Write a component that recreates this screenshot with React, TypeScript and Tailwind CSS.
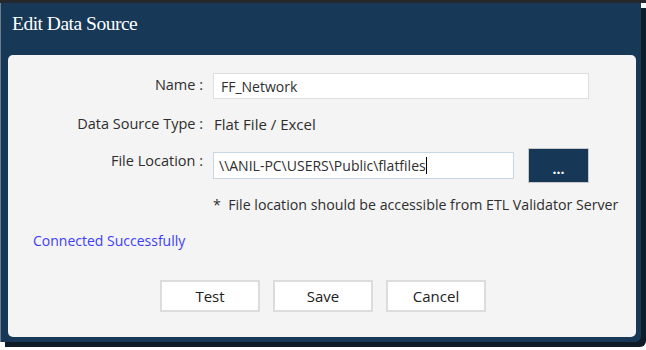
import React from "react";

const sans = { fontFamily: '"Open Sans", "Noto Sans", sans-serif' };

export default function App() {
  return (
    <div className="w-[646px] h-[350px] bg-white overflow-hidden border-t-[3px] border-[#25292d]">
      <div className="w-[641px] h-[339px] bg-[#173856] border-l border-[#6d7c88] rounded-br-[6px] shadow-[5px_5px_0_#0e1c28] flex flex-col">
        <div
          className="h-[52px] pl-[11px] pt-[8px] text-white text-[19.5px] leading-[25px] tracking-[-0.5px]"
          style={{ fontFamily: '"Liberation Serif", "DejaVu Serif", serif' }}
        >
          Edit Data Source
        </div>
        <div
          className="ml-[7px] mr-[5px] mb-[5px] flex-1 bg-[#f4f4f4] rounded-[5px] text-[14.5px] text-[#2e2e2e] flex flex-col"
          style={sans}
        >
          <div className="mt-[18px] grid grid-cols-[195px_1fr] gap-x-[10px] items-center">
            <div className="text-right -mt-[3px]">Name :</div>
            <div className="w-[376px] h-[26px] bg-white border border-[#dedede] pl-[7px] flex items-center text-[14px]">
              FF_Network
            </div>
          </div>
          <div className="mt-[12px] h-[26px] grid grid-cols-[195px_1fr] gap-x-[10px] items-center">
            <div className="text-right">Data Source Type :</div>
            <div className="pl-[1px] text-[15px]">Flat File / Excel</div>
          </div>
          <div className="mt-[11px] h-[35px] grid grid-cols-[195px_1fr] gap-x-[10px] items-center">
            <div className="text-right -mt-[9px]">File Location :</div>
            <div className="flex items-center">
              <div className="w-[301px] h-[27px] bg-white border border-[#c9d6e4] pl-[5px] flex items-center text-[14px]">
                <span>\\ANIL-PC\USERS\Public\flatfiles</span>
                <span className="w-px h-[17px] bg-black" />
              </div>
              <div className="ml-[14px] w-[61px] h-[35px] bg-[#163756] border border-[#c8c8c8] flex items-center justify-center pt-[6px] text-white font-bold text-[14px]">
                ...
              </div>
            </div>
          </div>
          <div className="mt-[13px] h-[18px] pl-[205px] flex items-center text-[14.2px] whitespace-nowrap">
            *&nbsp;&nbsp;File location should be accessible from ETL Validator Server
          </div>
          <div className="mt-[17px] h-[18px] pl-[25px] flex items-center text-[14px] text-[#3d3dfa]">
            Connected Successfully
          </div>
          <div className="mt-[31px] pl-[152px] flex gap-[13px] text-[15px] text-[#222]">
            <div className="w-[100px] h-[32px] bg-white border-2 border-[#dcdcdc] flex items-center justify-center">Test</div>
            <div className="w-[100px] h-[32px] bg-white border-2 border-[#dcdcdc] flex items-center justify-center">Save</div>
            <div className="w-[100px] h-[32px] bg-white border-2 border-[#dcdcdc] flex items-center justify-center">Cancel</div>
          </div>
        </div>
      </div>
    </div>
  );
}
